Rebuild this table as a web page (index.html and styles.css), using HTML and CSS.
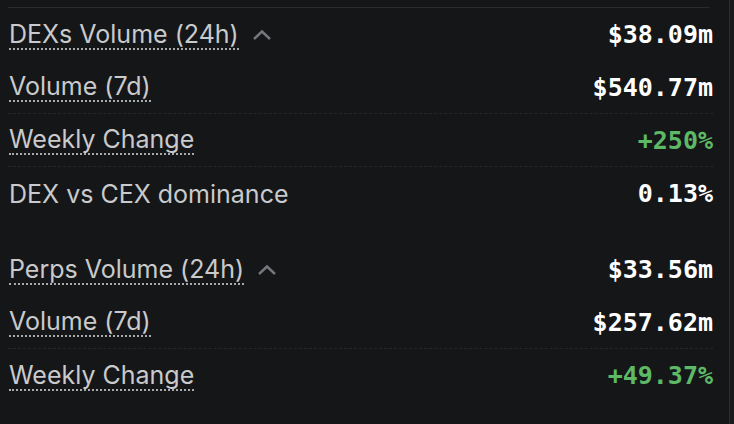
FILE: index.html
```html
<!DOCTYPE html>
<html lang="en">
<head>
    <meta charset="UTF-8">
    <meta name="viewport" content="width=device-width, initial-scale=1.0">
    <title>Volume Stats</title>
    <link rel="stylesheet" href="styles.css">
</head>
<body>
    <div class="panel">
        <div class="rule"></div>

        <div class="group">
            <div class="row head">
                <span class="label"><span class="tip">DEXs Volume (24h)</span>
                    <svg class="chevron" width="20" height="12" viewBox="0 0 20 12" fill="none" stroke="#76777b" stroke-width="2.4">
                        <polyline points="2,10 10,2.5 18,10"></polyline>
                    </svg>
                </span>
                <span class="value">$38.09m</span>
            </div>
            <div class="row line">
                <span class="label"><span class="tip">Volume (7d)</span></span>
                <span class="value">$540.77m</span>
            </div>
            <div class="row line">
                <span class="label"><span class="tip">Weekly Change</span></span>
                <span class="value up">+250%</span>
            </div>
            <div class="row">
                <span class="label">DEX vs CEX dominance</span>
                <span class="value">0.13%</span>
            </div>
        </div>

        <div class="group">
            <div class="row head">
                <span class="label"><span class="tip">Perps Volume (24h)</span>
                    <svg class="chevron" width="20" height="12" viewBox="0 0 20 12" fill="none" stroke="#76777b" stroke-width="2.4">
                        <polyline points="2,10 10,2.5 18,10"></polyline>
                    </svg>
                </span>
                <span class="value">$33.56m</span>
            </div>
            <div class="row line">
                <span class="label"><span class="tip">Volume (7d)</span></span>
                <span class="value">$257.62m</span>
            </div>
            <div class="row">
                <span class="label"><span class="tip">Weekly Change</span></span>
                <span class="value up">+49.37%</span>
            </div>
        </div>
    </div>
</body>
</html>
```

FILE: styles.css
```css
* {
    margin: 0;
    padding: 0;
    box-sizing: border-box;
}

body {
    font-family: Inter, "Noto Sans", sans-serif;
    background: #1a1b1d;
    color: #c9cacc;
    height: 100vh;
    overflow: hidden;
}

/* Main panel */
.panel {
    width: 730px;
    height: 100%;
    background: #151618;
    border-right: 1px solid #2b2c2f;
    padding: 7px 16px 0 8px;
}

.rule {
    height: 1px;
    margin-right: 4px;
    background: #2a2b2e;
}

.group {
    display: flex;
    flex-direction: column;
}

.group + .group {
    margin-top: 23px;
}

/* Rows */
.row {
    height: 53px;
    display: flex;
    align-items: center;
    justify-content: space-between;
    padding-left: 1px;
}

.row.line {
    border-bottom: 1px dashed #26272a;
}

.label {
    font-size: 25px;
    display: flex;
    align-items: center;
    gap: 13px;
}

.tip {
    line-height: 28px;
    border-bottom: 2px dotted #a9aaad;
}

.chevron {
    margin-top: 1px;
}

.value {
    font-family: "DejaVu Sans Mono", "Liberation Mono", monospace;
    font-weight: bold;
    font-size: 25px;
    color: #ffffff;
}

.value.up {
    color: #5db966;
}
```
